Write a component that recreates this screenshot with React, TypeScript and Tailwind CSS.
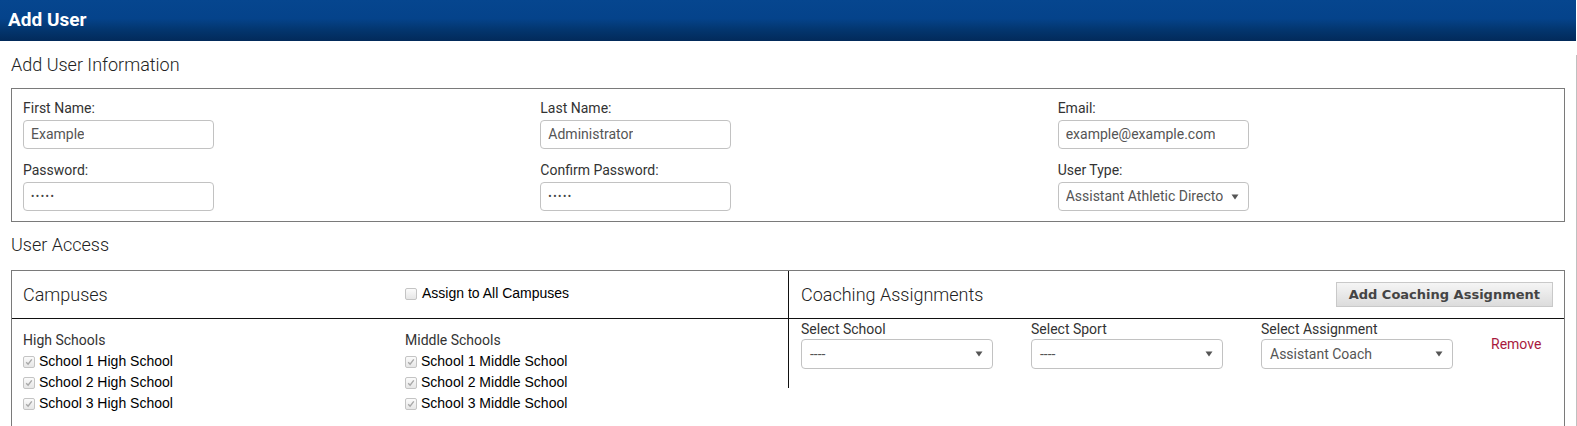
import React from "react";

function Caret() {
  return (
    <svg width="8" height="6" viewBox="0 0 8 6" className="shrink-0">
      <path d="M0.5 0.5 H7.5 L4 5.5 Z" fill="#555" />
    </svg>
  );
}

function Box({ checked }: { checked?: boolean }) {
  return (
    <span className="w-[12px] h-[12px] shrink-0 rounded-[2px] border border-[#c4c4c4] bg-[linear-gradient(to_bottom,#fbfbfb,#e6e6e6)] flex items-center justify-center">
      {checked && (
        <svg width="8" height="8" viewBox="0 0 8 8">
          <path d="M1.2 4.3 L3.1 6.2 L6.8 1.4" stroke="#a8a8a8" strokeWidth="1.4" fill="none" />
        </svg>
      )}
    </span>
  );
}

function Field({ label, value, select, dots }: { label: string; value: string; select?: boolean; dots?: boolean }) {
  return (
    <div className="pl-[11px]">
      <div className="text-[14px] leading-5 text-[#333]">{label}</div>
      <div className="mt-[2px] w-[191px] h-[29px] border border-[#c2c2c2] rounded-[4px] pl-[7px] pr-[9px] flex items-center justify-between text-[14px] text-[#555] overflow-hidden whitespace-nowrap">
        {dots ? <span className="text-[10px] tracking-[1.5px] text-[#444]">•••••</span> : <span className="overflow-hidden">{value}</span>}
        {select && <Caret />}
      </div>
    </div>
  );
}

function SelectBox({ label, value }: { label: string; value: string }) {
  return (
    <div>
      <div className="text-[14px] leading-5 text-[#333]">{label}</div>
      <div className="w-[192px] h-[30px] border border-[#c2c2c2] rounded-[4px] pl-[8px] pr-[9px] flex items-center justify-between text-[14px] text-[#555]">
        <span>{value}</span>
        <Caret />
      </div>
    </div>
  );
}

function CheckItem({ label, checked }: { label: string; checked?: boolean }) {
  return (
    <div className="flex items-center gap-[4px] h-[21px] font-['Liberation_Sans',Arial,sans-serif] text-[14px] text-black">
      <Box checked={checked} />
      <span>{label}</span>
    </div>
  );
}

export default function App() {
  return (
    <div className="w-[1577px] h-[426px] bg-white font-['Roboto',sans-serif] overflow-hidden">
      <div className="w-[1576px] h-[41px] pl-[8px] flex items-center bg-[linear-gradient(to_bottom,#06468f_0%,#05438b_45%,#03366f_72%,#022a5a_100%)]">
        <span className="text-white font-bold text-[19px] leading-5 pb-[1px]">Add User</span>
      </div>

      <div className="w-[1577px] h-[385px] border-r border-[#c0c0c0] px-[11px]">
        <h2 className="mt-[14px] text-[18px] font-light leading-5 text-[#222]">Add User Information</h2>

        <div className="mt-[13px] border border-[#7a7a7a] pt-[9px] pb-[10px] grid grid-cols-3 gap-y-[11px]">
          <Field label="First Name:" value="Example" />
          <Field label="Last Name:" value="Administrator" />
          <Field label="Email:" value="example@example.com" />
          <Field label="Password:" value="" dots />
          <Field label="Confirm Password:" value="" dots />
          <Field label="User Type:" value="Assistant Athletic Directo" select />
        </div>

        <h2 className="mt-[13px] text-[18px] font-light leading-5 text-[#222]">User Access</h2>

        <div className="mt-[15px] border border-[#7a7a7a] border-b-0">
          <div className="flex h-[48px] border-b border-[#111]">
            <div className="w-[776px] flex items-center">
              <div className="w-[393px] pl-[11px] text-[18px] font-light leading-6 text-[#222]">Campuses</div>
              <div className="flex items-center gap-[5px] font-['Liberation_Sans',Arial,sans-serif] text-[14px] text-black pb-[2px]">
                <Box />
                <span>Assign to All Campuses</span>
              </div>
            </div>
            <div className="flex-1 border-l border-[#111] pl-[12px] pr-[11px] flex items-center justify-between">
              <span className="text-[18px] font-light leading-6 text-[#222]">Coaching Assignments</span>
              <button className="h-[25px] px-[12px] border border-[#c9c9c9] bg-[linear-gradient(to_bottom,#f5f5f5,#dcdcdc)] font-['DejaVu_Sans',Verdana,sans-serif] font-bold text-[13px] text-[#444]">
                Add Coaching Assignment
              </button>
            </div>
          </div>

          <div className="flex items-start">
            <div className="w-[776px] flex pt-[11px] h-[107px]">
              <div className="w-[393px] pl-[11px]">
                <div className="text-[14px] leading-5 text-[#333] mb-[1px]">High Schools</div>
                <CheckItem label="School 1 High School" checked />
                <CheckItem label="School 2 High School" checked />
                <CheckItem label="School 3 High School" checked />
              </div>
              <div>
                <div className="text-[14px] leading-5 text-[#333] mb-[1px]">Middle Schools</div>
                <CheckItem label="School 1 Middle School" checked />
                <CheckItem label="School 2 Middle School" checked />
                <CheckItem label="School 3 Middle School" checked />
              </div>
            </div>
            <div className="flex-1 border-l border-[#111] pl-[12px] pb-[19px] grid grid-cols-[230px_230px_230px_auto]">
              <SelectBox label="Select School" value="----" />
              <SelectBox label="Select Sport" value="----" />
              <SelectBox label="Select Assignment" value="Assistant Coach" />
              <div className="pt-[15px] text-[14px] leading-5 text-[#a8193d]">Remove</div>
            </div>
          </div>
        </div>
      </div>
    </div>
  );
}
